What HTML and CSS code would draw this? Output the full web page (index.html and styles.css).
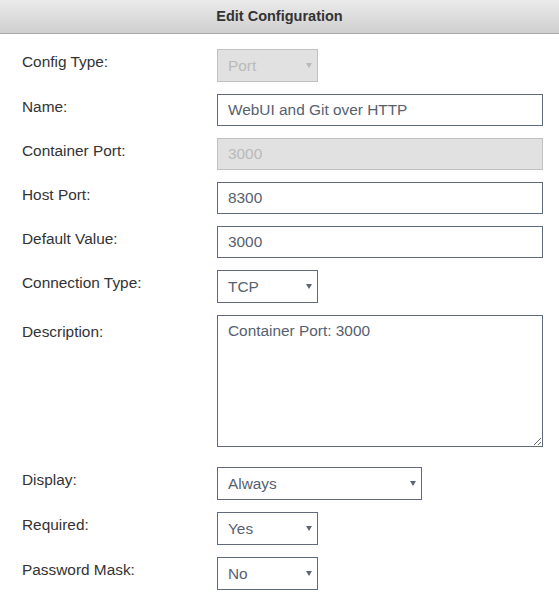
FILE: index.html
```html
<!DOCTYPE html>
<html lang="en">
<head>
  <meta charset="UTF-8" />
  <title>Edit Configuration</title>
  <link rel="stylesheet" href="styles.css">
</head>
<body>
  <div class="dialog-header">Edit Configuration</div>

  <form class="config-form">
    <div class="row">
      <label>Config Type:</label>
      <span class="select-wrap small disabled">
        <select disabled><option>Port</option></select>
      </span>
    </div>
    <div class="row">
      <label>Name:</label>
      <input type="text" value="WebUI and Git over HTTP" />
    </div>
    <div class="row">
      <label>Container Port:</label>
      <input type="text" value="3000" disabled />
    </div>
    <div class="row">
      <label>Host Port:</label>
      <input type="text" value="8300" />
    </div>
    <div class="row">
      <label>Default Value:</label>
      <input type="text" value="3000" />
    </div>
    <div class="row">
      <label>Connection Type:</label>
      <span class="select-wrap small">
        <select><option>TCP</option><option>UDP</option></select>
      </span>
    </div>
    <div class="row tall">
      <label>Description:</label>
      <textarea>Container Port: 3000</textarea>
    </div>
    <div class="row">
      <label>Display:</label>
      <span class="select-wrap medium">
        <select><option>Always</option><option>Advanced</option></select>
      </span>
    </div>
    <div class="row">
      <label>Required:</label>
      <span class="select-wrap small">
        <select><option>Yes</option><option>No</option></select>
      </span>
    </div>
    <div class="row">
      <label>Password Mask:</label>
      <span class="select-wrap small">
        <select><option>No</option><option>Yes</option></select>
      </span>
    </div>
  </form>
</body>
</html>
```

FILE: styles.css
```css
* {
  box-sizing: border-box;
}
body {
  margin: 0;
  background: #fff;
  color: #333;
  font-family: "Liberation Sans", Arial, sans-serif;
  font-size: 15.4px;
}
.dialog-header {
  height: 34px;
  line-height: 33px;
  text-align: center;
  font-size: 14.5px;
  font-weight: bold;
  color: #333;
  background: linear-gradient(#ebebeb, #cfcfcf);
  border-bottom: 1px solid #a9a9a9;
}
.config-form {
  padding: 15px 0 0 22px;
}
.row {
  display: flex;
  align-items: flex-start;
  margin-bottom: 12px;
}
.row label {
  width: 195px;
  flex-shrink: 0;
  line-height: 18px;
  padding-top: 4px;
}
.row.tall {
  margin-bottom: 20px;
}
.row.tall label {
  padding-top: 8px;
}
input, select, textarea {
  font-family: inherit;
  font-size: 15.4px;
  color: #566170;
  background: #fff;
  border: 1px solid #5f6b7a;
  border-radius: 0;
  margin: 0;
  outline: none;
}
input {
  width: 326px;
  height: 32px;
  padding: 0 10px;
}
textarea {
  display: block;
  width: 326px;
  height: 132px;
  padding: 6px 10px;
  line-height: 18px;
  resize: both;
}
input:disabled {
  background: #e1e1e1;
  border-color: #c2c2c2;
  color: #b9b9b9;
}
.select-wrap {
  position: relative;
  display: block;
}
.select-wrap select {
  appearance: none;
  -webkit-appearance: none;
  width: 100%;
  height: 33px;
  padding: 0 10px;
}
.select-wrap.small {
  width: 101px;
}
.select-wrap.medium {
  width: 205px;
}
.select-wrap::after {
  content: "";
  position: absolute;
  right: 6px;
  top: 14px;
  border-left: 3px solid transparent;
  border-right: 3px solid transparent;
  border-top: 5px solid #5d6673;
  pointer-events: none;
}
.select-wrap.disabled select {
  background: #e1e1e1;
  border-color: #c2c2c2;
  color: #b9b9b9;
  opacity: 1;
}
.select-wrap.disabled::after {
  border-top-color: #b9b9b9;
}
```
